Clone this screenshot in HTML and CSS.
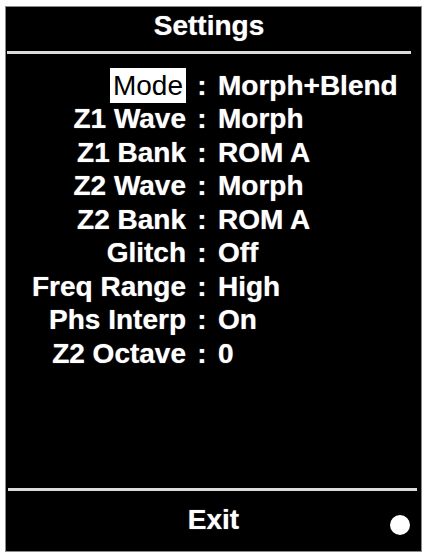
FILE: index.html
```html
<!DOCTYPE html>
<html>
<head>
<meta charset="utf-8">
<link rel="stylesheet" href="styles.css">
</head>
<body>
<div class="screen">
  <div class="header">Settings</div>
  <div class="rule rule-top"></div>
  <div class="rows">
    <div class="label"><span class="sel">Mode</span></div><div class="colon">:</div><div class="value">Morph+Blend</div>
    <div class="label">Z1 Wave</div><div class="colon">:</div><div class="value">Morph</div>
    <div class="label">Z1 Bank</div><div class="colon">:</div><div class="value">ROM A</div>
    <div class="label">Z2 Wave</div><div class="colon">:</div><div class="value">Morph</div>
    <div class="label">Z2 Bank</div><div class="colon">:</div><div class="value">ROM A</div>
    <div class="label">Glitch</div><div class="colon">:</div><div class="value">Off</div>
    <div class="label">Freq Range</div><div class="colon">:</div><div class="value">High</div>
    <div class="label">Phs Interp</div><div class="colon">:</div><div class="value">On</div>
    <div class="label">Z2 Octave</div><div class="colon">:</div><div class="value">0</div>
  </div>
  <div class="rule rule-bottom"></div>
  <div class="footer">
    <span class="exit">Exit</span>
    <span class="dot"></span>
  </div>
</div>
</body>
</html>
```

FILE: styles.css
```css
html, body {
  margin: 0;
  padding: 0;
  background: #ffffff;
}
body {
  width: 426px;
  height: 554px;
  overflow: hidden;
  font-family: "Liberation Sans", Arial, sans-serif;
}
.screen {
  margin: 6px 0 0 5px;
  width: 415px;
  height: 544px;
  border: 1px solid #8a8a8a;
  background: #000;
  color: #fff;
  display: flex;
  flex-direction: column;
  font-weight: bold;
  font-size: 28px;
  text-shadow: 0 0 1px rgba(255, 255, 255, 0.7);
}
.header {
  padding: 2px 9px 8px 0;
  line-height: 34px;
  height: 34px;
  text-align: center;
}
.rule {
  height: 3px;
  background: #dcdcdc;
  flex: none;
}
.rule-top {
  margin: 0 10px 0 1px;
}
.rule-bottom {
  margin: 0 4px 0 2px;
}
.rows {
  flex: 1;
  margin-top: 14.5px;
  display: grid;
  grid-template-columns: 180px 32px 1fr;
  grid-auto-rows: 33.5px;
  align-content: start;
  line-height: 33.5px;
}
.label {
  text-align: right;
  white-space: nowrap;
}
.colon {
  text-align: center;
}
.value {
  white-space: nowrap;
}
.sel {
  background: #fff;
  color: #000;
  font-weight: normal;
  text-shadow: none;
  padding: 2px 3px 2px 3px;
}
.footer {
  position: relative;
  height: 60px;
  padding-top: 12px;
  box-sizing: border-box;
  line-height: 34px;
  text-align: center;
}
.dot {
  position: absolute;
  left: 384px;
  top: 24px;
  width: 20px;
  height: 20px;
  border-radius: 50%;
  background: #fff;
}
```
